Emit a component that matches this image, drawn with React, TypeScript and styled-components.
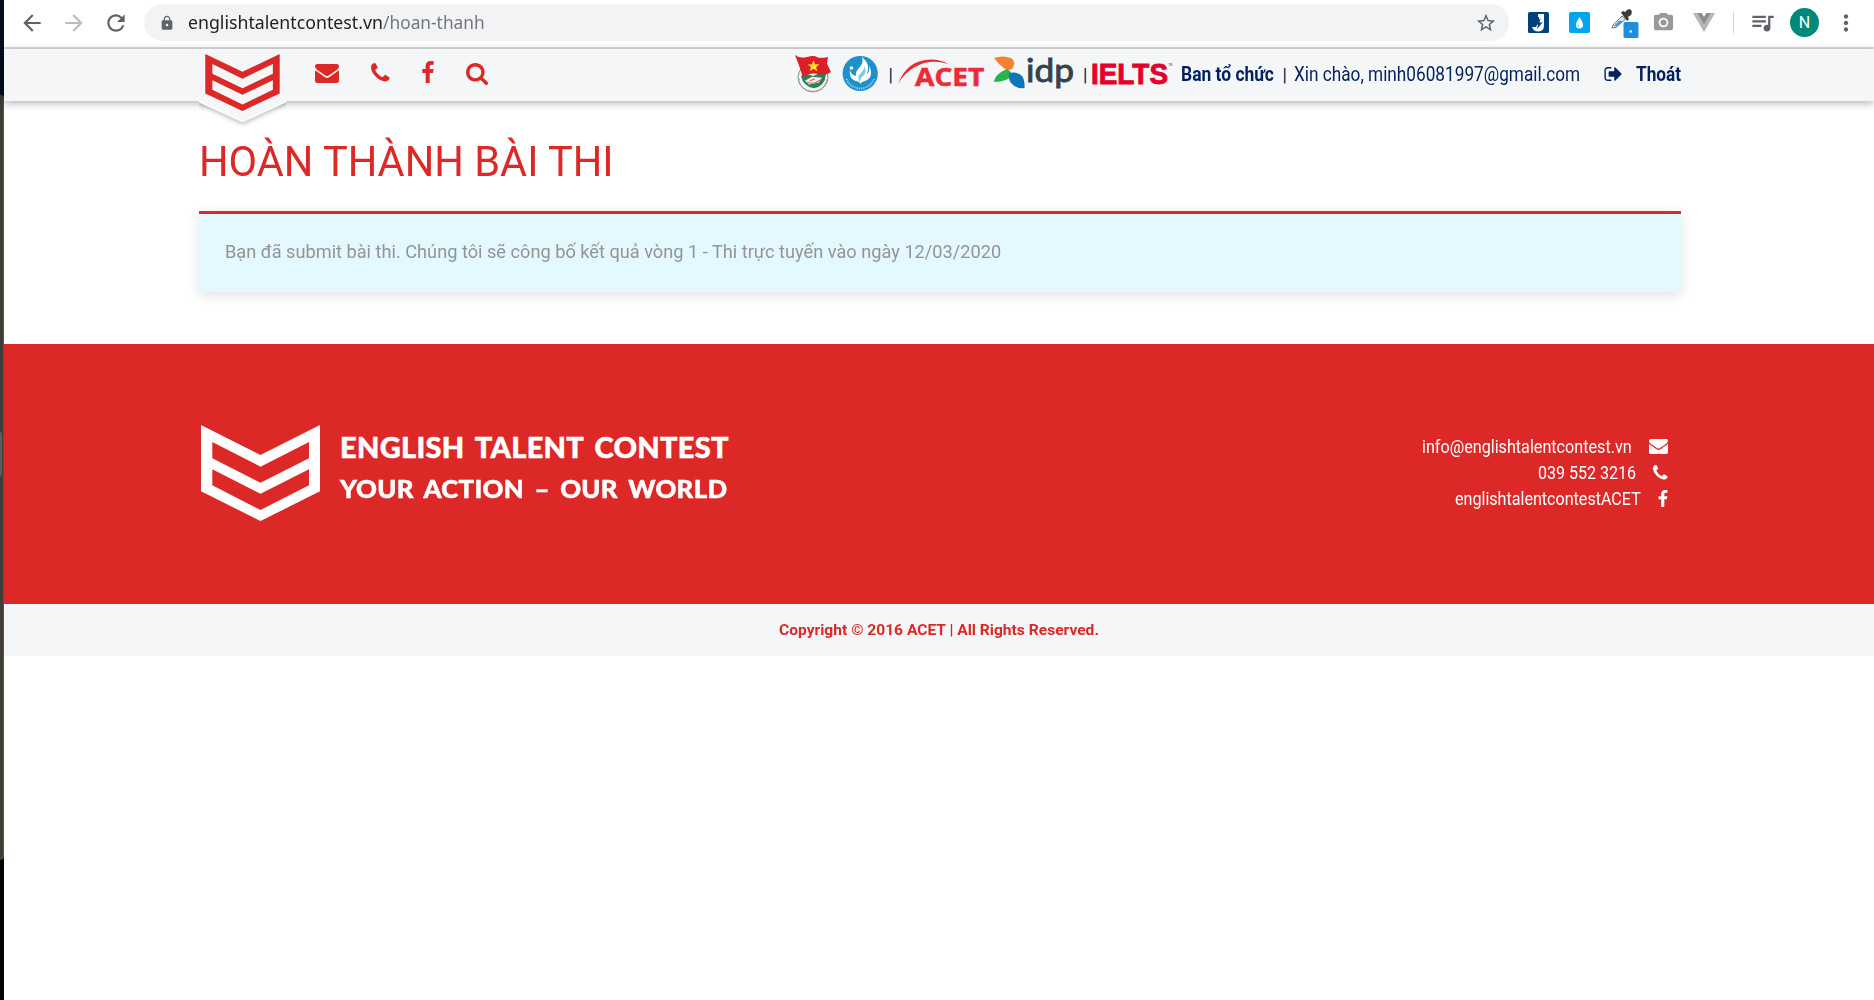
import React, { useLayoutEffect, useRef, useState } from "react";
import styled, { createGlobalStyle } from "styled-components";
import {
  MdArrowBack, MdArrowForward, MdRefresh, MdLock, MdStarBorder,
  MdCameraAlt, MdQueueMusic, MdMoreVert,
} from "react-icons/md";

const RED = "#dc2826";
const NAVY = "#00205f";
const PALE = "#f4f6f8";

const GlobalStyle = createGlobalStyle`
  * { box-sizing: border-box; }
  body { margin: 0; background: #fff; font-family: Roboto, "Liberation Sans", sans-serif; overflow: hidden; }
  svg { display: block; flex: none; overflow: visible; }
`;

/* ---------- text set to a fixed measure ---------- */
const Measure = styled.span<{ $w: number }>`
  display: inline-block;
  flex: none;
  width: ${(p) => p.$w}px;
  white-space: pre;
`;
const Stretch = styled.span`
  display: inline-block;
  transform-origin: 0 50%;
`;
function Fit({ w, children }: { w: number; children: React.ReactNode }) {
  const ref = useRef<HTMLSpanElement>(null);
  const [k, setK] = useState(1);
  useLayoutEffect(() => {
    if (ref.current) setK(w / ref.current.offsetWidth);
  }, [w]);
  return (
    <Measure $w={w}>
      <Stretch ref={ref} style={{ transform: `scaleX(${k})` }}>{children}</Stretch>
    </Measure>
  );
}

/* ---------- shell ---------- */
const Screen = styled.div`display: flex; width: 1874px; height: 1000px;`;
const Edge = styled.div`
  width: 4px; flex: none; display: flex; flex-direction: column;
  background: linear-gradient(#020d20 0 110px, #060402 840px);
`;
const EdgePanel = styled.div`
  margin-top: 95px; height: 765px; padding-top: 337px;
  background: #403d37; border-right: 1px solid #57534b; border-radius: 0 5px 5px 0;
`;
const EdgeThumb = styled.div`width: 2px; height: 44px; background: #605e58; border-radius: 0 2px 2px 0;`;
const Main = styled.div`flex: 1; min-width: 0;`;

/* ---------- browser bar ---------- */
const Toolbar = styled.div`
  height: 49px; border-bottom: 2px solid #dadce0; display: flex; align-items: flex-start;
  padding: 4px 15px 0 15px; background: #fff; color: #5f6368;
`;
const Nav = styled.div`display: flex; align-items: center; height: 37px; width: 125px; gap: 16px;`;
const Omnibox = styled.div`
  width: 1365px; height: 37px; border-radius: 19px; background: #f1f3f4;
  display: flex; align-items: center; padding: 0 12px 0 15px;
  font: 18px "Noto Sans", sans-serif; color: #202124;
`;
const Path = styled.span`color: #74777b;`;
const Address = styled.div`display: flex; margin-left: 13px; flex: 1; padding-bottom: 1px;`;
const Muted = styled.div`color: #5f6368;`;
const Extensions = styled.div`display: flex; align-items: center; height: 37px; margin-left: 19px;`;
const Tool = styled.div<{ $ml?: number }>`margin-left: ${(p) => p.$ml ?? 0}px; display: flex; flex: none;`;
const Divider = styled.div`width: 1px; height: 21px; background: #cfd1d4; margin-left: 18px;`;
const Avatar = styled.div`
  width: 29px; height: 29px; margin-left: 14px; border-radius: 50%; background: #00897b; color: #fff;
  display: flex; align-items: center; justify-content: center; font-size: 16px; flex: none;
`;

/* ---------- site header ---------- */
const Header = styled.header`
  height: 52px; background: ${PALE}; display: flex; align-items: flex-start; padding-left: 195px;
  position: relative; box-shadow: 0 2px 8px rgba(0, 0, 0, 0.32); color: ${NAVY}; font-size: 19.5px;
`;
const Brand = styled.div`width: 87px; height: 49px; margin-top: 3px; flex: none; clip-path: inset(0 0 -36px 0);`;
const BrandShape = styled.div`filter: drop-shadow(0 2px 2px rgba(0, 0, 0, 0.25));`;
const Links = styled.div`display: flex; align-items: flex-start; padding-top: 12px; margin-left: 29px; width: 480px;`;
const LinkIcon = styled.div<{ $ml?: number; $mt?: number }>`
  margin-left: ${(p) => p.$ml ?? 0}px; margin-top: ${(p) => p.$mt ?? 0}px; color: ${RED};
`;
const Partners = styled.div`display: flex; align-items: center; height: 50px; width: 386px; flex: none;`;
const Account = styled.div`display: flex; align-items: center; height: 50px; flex: none;`;
const Gap = styled.div<{ $w: number }>`width: ${(p) => p.$w}px; flex: none;`;
const Bar = styled.span`width: 5px; margin: 0 -2px 0 -1.5px; flex: none; font-size: 18px;`;
const Strong = styled.b`font-weight: 700; display: flex;`;

/* ---------- page ---------- */
const Content = styled.main`height: 243px; padding: 32px 193px 0 195px;`;
const Title = styled.h1`margin: 0; height: 78px; font-size: 42px; line-height: 58px; font-weight: 400; color: ${RED};`;
const Notice = styled.div`
  height: 81px; border-top: 3px solid ${RED}; background: #e3f9ff; color: #949494; font-size: 18px;
  line-height: 24px; padding: 26px 25.5px; box-shadow: 0 3px 12px rgba(0, 0, 0, 0.12);
`;
const Footer = styled.footer`
  height: 260px; background: ${RED}; color: #fff; display: flex; padding: 81px 206.5px 0 197px;
`;
const Slogan = styled.div`
  margin-left: 20px; padding-top: 1px; font-family: Lato, sans-serif; font-weight: 900;
`;
const SloganLine = styled.div<{ $size: number; $h: number }>`
  font-size: ${(p) => p.$size}px; height: ${(p) => p.$h}px; line-height: ${(p) => p.$h}px;
  word-spacing: 4px; letter-spacing: 0.3px; -webkit-text-stroke: 0.5px #fff;
`;
const Contacts = styled.div`margin-left: auto; padding-top: 8px; font-size: 18px;`;
const Contact = styled.div`height: 26px; display: flex; align-items: center; justify-content: flex-end; gap: 17px;`;
const Copyright = styled.div`
  height: 52px; background: ${PALE}; color: ${RED}; font-size: 15px; font-weight: 700;
  display: flex; align-items: center; justify-content: center;
`;

/* ---------- icons ---------- */
const GLYPHS = {
  envelope: ["0 256 1792 1408", "M1792 710v794q0 66-47 113t-113 47h-1472q-66 0-113-47t-47-113v-794q44 49 101 87 362 246 497 345 57 42 92.5 65.5t94.5 48 110 24.5h2q51 0 110-24.5t94.5-48 92.5-65.5q170-123 498-345 57-39 100-87zm0-294q0 79-49 151t-122 123q-376 261-468 325-10 7-42.5 31t-54 38.5-52 32.5-57.5 27-50 9h-2q-23 0-50-9t-57.5-27-52-32.5-54-38.5-42.5-31q-91-64-262-182.5t-205-142.5q-62-42-117-115.5t-55-136.5q0-78 41.5-130t118.5-52h1472q65 0 112.5 47t47.5 113z"],
  phone: ["192 128 1408 1408", "M1600 1240q0 27-10 70.5t-21 68.5q-21 50-122 106-94 51-186 51-27 0-53-3.5t-57.5-12.5-47-14.5-55.5-20.5-49-18q-98-35-175-83-127-79-264-216t-216-264q-48-77-83-175-3-9-18-49t-20.5-55.5-14.5-47-12.5-57.5-3.5-53q0-92 51-186 56-101 106-122 25-11 68.5-21t70.5-10q14 0 21 3 18 6 53 76 11 19 30 54t35 63.5 31 53.5q3 4 17.5 25t21.5 35.5 7 28.5q0 20-28.5 50t-62 55-62 53-28.5 46q0 9 5 22.5t8.5 20.5 14 24 11.5 19q76 137 174 235t235 174q2 1 19 11.5t24 14 20.5 8.5 22.5 5q18 0 46-28.5t53-62 55-62 50-28.5q14 0 28.5 7t35.5 21.5 25 17.5q25 15 53.5 31t63.5 35 54 30q70 35 76 53 3 7 3 21z"],
  facebook: ["479 0 864 1664", "M1343 12v264h-157q-86 0-116 36t-30 108v189h293l-39 296h-254v759h-306v-759h-255v-296h255v-218q0-186 104-288.5t277-102.5q147 0 228 12z"],
  search: ["64 128 1664 1664", "M1216 832q0-185-131.5-316.5t-316.5-131.5-316.5 131.5-131.5 316.5 131.5 316.5 316.5 131.5 316.5-131.5 131.5-316.5zm512 832q0 52-38 90t-90 38q-54 0-90-38l-343-342q-179 124-399 124-143 0-273.5-55.5t-225-150-150-225-55.5-273.5 55.5-273.5 150-225 225-150 273.5-55.5 273.5 55.5 225 150 150 225 55.5 273.5q0 220-124 399l343 343q37 37 37 90z"],
  signout: ["64 256 1568 1280", "M704 1440q0 4 1 20t.5 26.5-3 23.5-10 19.5-20.5 6.5h-320q-119 0-203.5-84.5t-84.5-203.5v-704q0-119 84.5-203.5t203.5-84.5h320q13 0 22.5 9.5t9.5 22.5q0 4 1 20t.5 26.5-3 23.5-10 19.5-20.5 6.5h-320q-66 0-113 47t-47 113v704q0 66 47 113t113 47h312l11.5 1 11.5 3 8 5.5 7 9 2 13.5zm928-544q0 26-19 45l-544 544q-19 19-45 19t-45-19-19-45v-288h-448q-26 0-45-19t-19-45v-384q0-26 19-45t45-19h448v-288q0-26 19-45t45-19 45 19l544 544q19 19 19 45z"],
} as const;
function Glyph({ name, w, h }: { name: keyof typeof GLYPHS; w: number; h: number }) {
  return (
    <svg width={w} height={h} viewBox={GLYPHS[name][0]}><path fill="currentColor" d={GLYPHS[name][1]} /></svg>
  );
}

const CHEVRONS =
  "M58 76 221 166 384 76V275L221 364 58 275ZM89 127V176L221 249 354 176V127L221 201ZM89 209V257L221 331 354 257V209L221 282Z";

const BrandMark = () => (
  <svg width="87" height="71" viewBox="0 0 87 71">
    <path fill={PALE} d="M0 0H87V50L43.5 70 0 50Z" />
    <path fill="none" stroke="#fff" strokeWidth="1.5" d="M0 49.5 43.5 69.5 87 49.5" />
    <svg x="6.3" y="2" width="74.4" height="57" viewBox="58 76 326 288" preserveAspectRatio="none">
      <path fill={RED} fillRule="evenodd" d={CHEVRONS} />
    </svg>
  </svg>
);

const YouthUnion = () => (
  <svg width="36" height="38" viewBox="0 0 36 40" preserveAspectRatio="none">
    <circle cx="18" cy="23.500" r="15" fill="#f3f6f4" stroke="#5b9878" strokeWidth="1" />
    <path d="M4 25A13.500 13.500 0 0 0 31.500 25" fill="none" stroke="#c98b78" strokeWidth="1.300" strokeDasharray="1.500 1.200" />
    <path d="M6 22Q11 19 18 22 25 18 31 20 30 33 19 35 8 33 6 22Z" fill="#28825a" />
    <path d="M10 27 17 23 27 24 24 29 14 31Z" fill="#f8eceb" />
    <path d="M12 29 19 30 26 26M15 27 20 25" fill="none" stroke="#d56455" strokeWidth="1.100" />
    <path d="M0 0Q5 4 12 2T22 2 33 2L32 9Q34 14 36 18 31 22 23 20T8 24L4 11Z" fill="#dc2027" />
    <path d="m18.500 5.500 1.600 4.300 4.500.2-3.500 2.700 1.200 4.300-3.800-2.500-3.800 2.500 1.300-4.300-3.500-2.700 4.500-.2Z" fill="#ffdd27" />
  </svg>
);
const StudentUnion = () => (
  <svg width="37" height="36" viewBox="0 0 37 36">
    <circle cx="18.200" cy="17.500" r="17.600" fill="#1e91cc" />
    <path d="M4.500 23A14.700 14.700 0 0 0 32 23" fill="none" stroke="#9fd3ee" strokeWidth="1.800" strokeDasharray="1.300 1" />
    <path d="M8 14C7 20 10 24 14 25Q18 26 18.500 28 19 26 23 25C29 23 31 17 27 10Q28 16 25 18 29 8 20 1 22 7 17 12 13 16 14 20 9 19 8 14Z" fill="#fff" />
    <path d="M18 26Q14 21 19 17 23 13 22 10 25 15 22 19 18 22 18 26Z" fill="#7fc5e6" />
    <circle cx="9.500" cy="12" r="1.800" fill="#fff" />
  </svg>
);
const Acet = () => (
  <svg width="87" height="30" viewBox="0 0 87 30">
    <path d="M0 25Q9 1 33 .6 43 .8 50 5 32-.5 17 8 6 14 0 25Z" fill="#ee2a36" />
    <text x="17" y="27.3" textLength="69.3" lengthAdjust="spacingAndGlyphs" fontFamily="'Open Sans'" fontWeight="700" fontSize="25" fill="#ee2a36" stroke="#ee2a36" strokeWidth=".5">ACET</text>
  </svg>
);
const Idp = () => (
  <svg width="80" height="36" viewBox="0 0 80 36">
    <path d="M0 2Q9-1 17 2 23 6 18 13 15 15 11 13 4 8 0 2Z" fill="#f58233" />
    <path d="M0 26Q1 19 9 15L13 13 17 16Q17 20 14 23 8 26 0 26Z" fill="#29b34b" />
    <path d="M15 17Q23 15 28 20 31 24 30.500 32 22 33 17 27 14 23 15 17Z" fill="#0e75ba" />
    <text x="32" y="26.3" textLength="48" lengthAdjust="spacingAndGlyphs" fontFamily="Lato" fontWeight="400" fontSize="33" fill="#36424a" stroke="#36424a" strokeWidth=".9">idp</text>
  </svg>
);
const Ielts = () => (
  <svg width="79" height="26" viewBox="0 0 79 26">
    <text x="-1" y="23.300" textLength="77" lengthAdjust="spacingAndGlyphs" fontFamily="'Liberation Sans'" fontWeight="700" fontSize="29" fill="#e4002b" stroke="#e4002b" strokeWidth=".9">IELTS</text>
    <text x="76.200" y="4.500" textLength="4" lengthAdjust="spacingAndGlyphs" fontFamily="Roboto" fontSize="4" fill="#444">TM</text>
  </svg>
);

const BoltJ = () => (
  <svg width="21" height="21" viewBox="0 0 21 21">
    <rect width="21" height="21" rx="1.5" fill="#00427b" />
    <path d="M10 2H16V13Q16 19.500 10.500 19.500 5.500 19.500 4 15H8L11 9V5H10Z" fill="#fff" />
    <path d="M12.500 6 7 12.500H10L9 17 14.500 10.500H11.500Z" fill="#00427b" />
  </svg>
);
const Drop = () => (
  <svg width="21" height="21" viewBox="0 0 21 21">
    <rect width="21" height="21" rx="2" fill="#03a5ef" />
    <path d="M10.500 5Q14 10 14 13A3.500 3.500 0 0 1 7 13Q7 10 10.500 5Z" fill="#fff" />
    <path d="M9 12.500Q8.500 14 10 14.800" fill="none" stroke="#03a5ef" strokeWidth=".7" />
  </svg>
);
const Dropper = () => (
  <svg width="28" height="30" viewBox="0 0 28 30">
    <path d="M1 20 2 17 11 8 14.500 11 5 19.500Z" fill="#d8e4ec" stroke="#777" strokeWidth="1" />
    <path d="M3 18 8 13 12 13 5 18.500Z" fill="#3b94d6" />
    <path d="M10 4.500 12 3 14 4Q16 1 19 1 22 3 20 7L17 9 18 11 16 13Z" fill="#3c3c3c" />
    <rect x="12.500" y="14" width="15" height="16" rx="1.500" fill="#208fdb" />
    <circle cx="19.800" cy="23.500" r="1.200" fill="#fff" />
  </svg>
);
const Vee = () => (
  <svg width="22" height="19" viewBox="0 0 22 19">
    <path d="M0 0H8.500L11 4 13.500 0H22L11 19Z" fill="#b5b5b5" />
    <path d="M4.500 0H8.500L11 4 13.500 0H17.500L11 11.500Z" fill="#8c8c8c" />
  </svg>
);

export default function App() {
  return (
    <>
      <GlobalStyle />
      <Screen>
        <Edge><EdgePanel><EdgeThumb /></EdgePanel></Edge>
        <Main>
          <Toolbar>
            <Nav>
              <MdArrowBack size={26} />
              <MdArrowForward size={26} color="#babcbe" />
              <MdRefresh size={26} />
            </Nav>
            <Omnibox>
              <MdLock size={16} color="#5f6368" />
              <Address>
                <Fit w={195}>englishtalentcontest.vn</Fit>
                <Path><Fit w={102}>/hoan-thanh</Fit></Path>
              </Address>
              <Muted><MdStarBorder size={22} /></Muted>
            </Omnibox>
            <Extensions>
              <BoltJ />
              <Tool $ml={20}><Drop /></Tool>
              <Tool $ml={21}><Dropper /></Tool>
              <Tool $ml={13}><MdCameraAlt size={23} color="#999" /></Tool>
              <Tool $ml={18}><Vee /></Tool>
              <Divider />
              <Tool $ml={15}><MdQueueMusic size={27} /></Tool>
              <Avatar>N</Avatar>
              <Tool $ml={14}><MdMoreVert size={26} /></Tool>
            </Extensions>
          </Toolbar>

          <Header>
            <Brand><BrandShape><BrandMark /></BrandShape></Brand>
            <Links>
              <LinkIcon $mt={3}><Glyph name="envelope" w={24} h={19} /></LinkIcon>
              <LinkIcon $ml={32} $mt={2}><Glyph name="phone" w={18.5} h={18.5} /></LinkIcon>
              <LinkIcon $ml={32.5}><Glyph name="facebook" w={12} h={22} /></LinkIcon>
              <LinkIcon $ml={32} $mt={1.5}><Glyph name="search" w={22} h={22} /></LinkIcon>
            </Links>
            <Partners>
              <YouthUnion />
              <Gap $w={11} />
              <StudentUnion />
              <Gap $w={11} />
              <Bar>|</Bar>
              <Gap $w={6} />
              <Acet />
              <Gap $w={9} />
              <Idp />
              <Gap $w={11} />
              <Bar>|</Bar>
              <Gap $w={6} />
              <Ielts />
            </Partners>
            <Account>
              <Strong><Fit w={93}>Ban tổ chức</Fit></Strong>
              <Gap $w={10} />
              <Bar>|</Bar>
              <Gap $w={8.5} />
              <Fit w={286}>Xin chào, minh06081997@gmail.com</Fit>
              <Gap $w={24} />
              <Glyph name="signout" w={18} h={14} />
              <Gap $w={14} />
              <Strong><Fit w={45}>Thoát</Fit></Strong>
            </Account>
          </Header>

          <Content>
            <Title><Fit w={415}>HOÀN THÀNH BÀI THI</Fit></Title>
            <Notice>
              <Fit w={776}>Bạn đã submit bài thi. Chúng tôi sẽ công bố kết quả vòng 1 - Thi trực tuyến vào ngày 12/03/2020</Fit>
            </Notice>
          </Content>

          <Footer>
            <svg width="119" height="96" viewBox="58 76 326 288" preserveAspectRatio="none">
              <path fill="#fff" fillRule="evenodd" d={CHEVRONS} />
            </svg>
            <Slogan>
              <SloganLine $size={29} $h={42}><Fit w={389}>ENGLISH TALENT CONTEST</Fit></SloganLine>
              <SloganLine $size={25.5} $h={41}><Fit w={387}>YOUR ACTION – OUR WORLD</Fit></SloganLine>
            </Slogan>
            <Contacts>
              <Contact><Fit w={210}>info@englishtalentcontest.vn</Fit><Glyph name="envelope" w={19} h={15} /></Contact>
              <Contact><Fit w={98}>039 552 3216</Fit><Glyph name="phone" w={14.5} h={14.5} /></Contact>
              <Contact><Fit w={186}>englishtalentcontestACET</Fit><Glyph name="facebook" w={10} h={17} /></Contact>
            </Contacts>
          </Footer>
          <Copyright><Fit w={320}>Copyright © 2016 ACET | All Rights Reserved.</Fit></Copyright>
        </Main>
      </Screen>
    </>
  );
}
